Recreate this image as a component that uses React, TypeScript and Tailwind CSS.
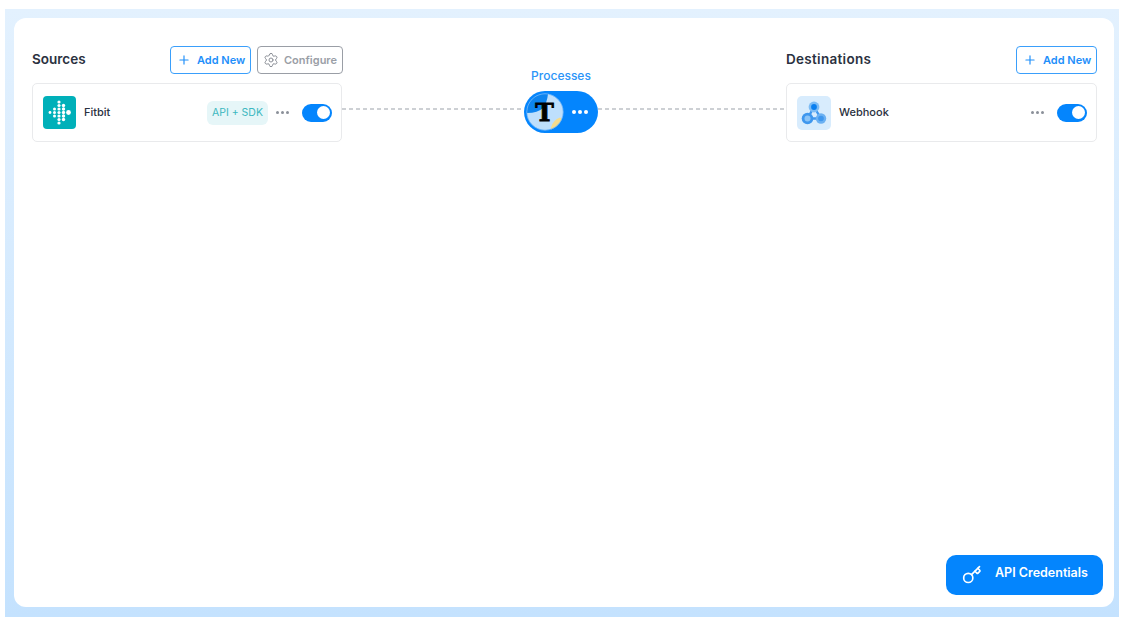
import { Plus, Settings, Key } from "lucide-react";

function Toggle() {
  return (
    <div className="flex h-[18px] w-[30px] items-center justify-end rounded-full bg-[#0485fd] pr-[2px]">
      <div className="h-[13px] w-[13px] rounded-full bg-white" />
    </div>
  );
}

function Dots({ color = "bg-[#8b9099]", size = "h-[3px] w-[3px]" }: { color?: string; size?: string }) {
  return (
    <div className="flex items-center gap-[2px]">
      <span className={`${size} rounded-full ${color}`} />
      <span className={`${size} rounded-full ${color}`} />
      <span className={`${size} rounded-full ${color}`} />
    </div>
  );
}

function AddNew() {
  return (
    <button className="flex h-[28px] w-[81px] items-center rounded-[4px] border border-[#3a9ffb] bg-white pl-[6px] text-[11px] font-semibold text-[#1f8ffa]">
      <Plus size={14} strokeWidth={2} className="mr-[6px]" />
      Add New
    </button>
  );
}

function FitbitIcon() {
  const cols: [number, number[], number][] = [
    [7, [16.5], 1.4],
    [11.5, [13, 16.5, 20], 1.5],
    [16, [6, 9.5, 13, 16.5, 20, 23.5, 27], 1.6],
    [20.5, [9.5, 13, 16.5, 20, 23.5], 1.7],
    [25.5, [16.5], 2.4],
  ];
  return (
    <svg width="33" height="33" viewBox="0 0 33 33" className="shrink-0">
      <rect width="33" height="33" rx="4" fill="#00b0b9" />
      {cols.map(([x, ys, r]) =>
        ys.map((y) => <circle key={`${x}-${y}`} cx={x} cy={y} r={r} fill="#fff" />)
      )}
    </svg>
  );
}

function WebhookIcon() {
  return (
    <svg width="34" height="34" viewBox="0 0 34 34" className="shrink-0">
      <rect width="34" height="34" rx="5" fill="#d8ecfd" />
      <path d="M17 11 L10.5 22.5 L24 22.5 Z" fill="none" stroke="#3f97ee" strokeWidth="2.4" />
      <circle cx="17" cy="11" r="5.4" fill="#7dbcf5" />
      <circle cx="17" cy="11" r="2.9" fill="#0a7fef" />
      <circle cx="10.5" cy="22.5" r="5.8" fill="#3f97ee" />
      <circle cx="10.5" cy="22.5" r="3" fill="#8cc4f6" />
      <circle cx="24" cy="22.5" r="5.2" fill="#6cb1f2" />
      <circle cx="24" cy="22.5" r="2.8" fill="#3f97ee" />
    </svg>
  );
}

function TIcon() {
  return (
    <svg width="38" height="38" viewBox="0 0 38 38" className="shrink-0">
      <circle cx="19" cy="19" r="18.2" fill="#bedffc" />
      <path d="M0.9 20 Q12 20 17 15 Q21 10 22 0.9 A18.2 18.2 0 0 0 0.9 20 Z" fill="#0d84ef" />
      <path d="M25 34.5 Q27 27 34 24.5 Q36 25 35.5 27 Q32 34 25 36.5 Z" fill="#f6dc8c" />
      <circle cx="19" cy="19" r="18.2" fill="none" stroke="#6db4f7" strokeWidth="0.8" />
      <text
        x="18.5"
        y="28"
        textAnchor="middle"
        fontFamily="'DejaVu Serif', serif"
        fontWeight="900"
        fontSize="25"
        fill="#000"
        stroke="#000"
        strokeWidth="0.8"
      >
        T
      </text>
    </svg>
  );
}

const font = { fontFamily: "Inter, 'Liberation Sans', sans-serif" };

export default function App() {
  return (
    <div className="h-[622px] w-[1130px] bg-white pb-[5px] pl-[5px] pr-[11px] pt-[9px]" style={font}>
      <div className="h-full w-full bg-gradient-to-b from-[#e3f1fe] to-[#c4e2fe] pb-[10px] pl-[9px] pr-[5px] pt-[9px]">
        <div className="flex h-full w-full flex-col rounded-[12px] bg-white pl-[18px] pr-[17px] pt-[28px]">
          <div className="flex">
            <div className="w-[310px]">
              <div className="-mr-[1px] flex h-[28px] items-center">
                <h2 className="pb-[2px] text-[13.5px] font-semibold text-[#2a3140]">Sources</h2>
                <div className="ml-auto flex gap-[6px]">
                  <AddNew />
                  <button className="flex h-[28px] w-[86px] items-center rounded-[4px] border border-[#9a9ea6] bg-white pl-[5px] text-[11px] font-semibold text-[#9a9ea6]">
                    <Settings size={16} strokeWidth={1.5} className="mr-[5px] text-[#8b8f97]" />
                    Configure
                  </button>
                </div>
              </div>
              <div className="mt-[9px] flex h-[59px] items-center rounded-[5px] border border-[#e9eaec] bg-white pl-[10px] pr-[9px]">
                <FitbitIcon />
                <span className="ml-[8px] text-[11px] font-medium text-[#2a3140]">Fitbit</span>
                <span className="ml-auto flex h-[24px] w-[61px] items-center justify-center rounded-[6px] bg-[#e6f6f8] text-[10.5px] text-[#3db8c0]">
                  API + SDK
                </span>
                <div className="ml-[8px] mr-[13px]">
                  <Dots />
                </div>
                <Toggle />
              </div>
            </div>

            <div className="flex min-w-0 flex-1 flex-col">
              <div className="ml-[182px] mt-[22px] flex h-[16px] w-[74px] justify-center whitespace-nowrap text-[12px] font-medium leading-[16px] text-[#2a94f8]">
                Processes
              </div>
              <div className="mt-[7px] flex w-full items-start">
                <div className="mt-[17px] h-[2px] w-[182px] bg-[repeating-linear-gradient(90deg,#cdd0d4_0,#cdd0d4_4px,transparent_4px,transparent_7px)]" />
                <div className="flex h-[42px] w-[74px] items-center rounded-full bg-[#0485fd] pl-[2px]">
                  <TIcon />
                  <div className="ml-[8px]">
                    <Dots color="bg-white" size="h-[4px] w-[4px]" />
                  </div>
                </div>
                <div className="mt-[17px] h-[2px] flex-1 bg-[repeating-linear-gradient(90deg,#cdd0d4_0,#cdd0d4_4px,transparent_4px,transparent_7px)]" />
              </div>
            </div>

            <div className="w-[311px]">
              <div className="flex h-[28px] items-center justify-between">
                <h2 className="pb-[2px] text-[13.5px] font-semibold tracking-[0.3px] text-[#2a3140]">Destinations</h2>
                <AddNew />
              </div>
              <div className="mt-[9px] flex h-[59px] items-center rounded-[5px] border border-[#e9eaec] bg-white pl-[10px] pr-[9px]">
                <WebhookIcon />
                <span className="ml-[8px] text-[11px] font-medium text-[#2a3140]">Webhook</span>
                <div className="ml-auto mr-[13px]">
                  <Dots />
                </div>
                <Toggle />
              </div>
            </div>
          </div>

          <div className="mt-auto flex justify-end pb-[12px]">
            <button className="-mr-[6px] flex h-[40px] w-[157px] items-center rounded-[10px] bg-[#0485fd] pb-[4px] pl-[16px] text-[12.5px] font-semibold text-white">
              <Key size={20} strokeWidth={2} className="mr-[13px] mt-[4px]" />
              API Credentials
            </button>
          </div>
        </div>
      </div>
    </div>
  );
}
